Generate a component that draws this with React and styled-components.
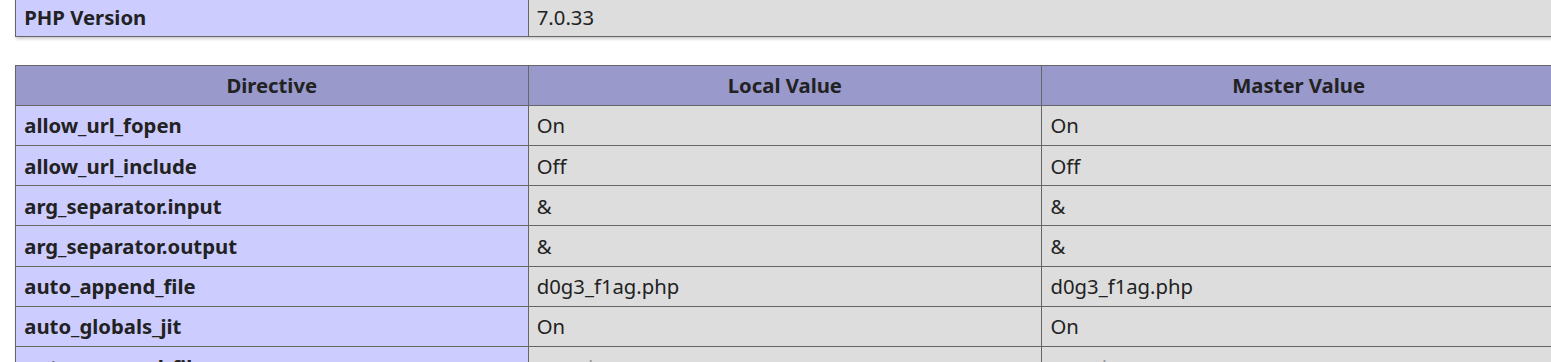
import React from 'react'
import styled, { createGlobalStyle } from 'styled-components'

const GlobalStyle = createGlobalStyle`
    html, body {
        margin: 0;
        padding: 0;
        background: #fff;
        overflow: hidden;
    }
    body {
        color: #222;
        font-family: "Noto Sans", "Open Sans", sans-serif;
    }
`

const Page = styled.div`
    width: 1551px;
    height: 362px;
    overflow: hidden;
`
const Table = styled.table`
    border-collapse: collapse;
    border: 0;
    width: 1541px;
    margin: ${p => p.$top} 0 0 15px;
    box-shadow: 1px 2px 3px #ccc;
    font-size: 20.3px;
    line-height: 26px;
`
const Cell = styled.td`
    border: 1px solid #666;
    padding: 6.6px 8.25px;
    vertical-align: baseline;
    text-align: left;
    white-space: nowrap;
`
const Key = styled(Cell)`
    width: 495px;
    background-color: #ccf;
    font-weight: bold;
`
const Value = styled(Cell)`
    background-color: #ddd;
`
const Head = styled.th`
    border: 1px solid #666;
    padding: 6.6px 8.25px;
    background-color: #99c;
    font-weight: bold;
    text-align: center;
    vertical-align: baseline;
`
const NoValue = styled.i`
    color: #999;
`

const rows = [
    ['allow_url_fopen', 'On', 'On'],
    ['allow_url_include', 'Off', 'Off'],
    ['arg_separator.input', '&', '&'],
    ['arg_separator.output', '&', '&'],
    ['auto_append_file', 'd0g3_f1ag.php', 'd0g3_f1ag.php'],
    ['auto_globals_jit', 'On', 'On'],
    ['auto_prepend_file', null, null],
]

const show = (v) => v === null ? <NoValue>no value</NoValue> : v

const App = () => {
    return (
        <Page>
            <GlobalStyle />
            <Table $top="-4px">
                <tbody>
                    <tr>
                        <Key>PHP Version</Key>
                        <Value>7.0.33</Value>
                    </tr>
                </tbody>
            </Table>
            <Table $top="27.5px">
                <tbody>
                    <tr>
                        <Head>Directive</Head>
                        <Head>Local Value</Head>
                        <Head>Master Value</Head>
                    </tr>
                    {rows.map(([name, local, master]) => (
                        <tr key={name}>
                            <Key>{name}</Key>
                            <Value>{show(local)}</Value>
                            <Value>{show(master)}</Value>
                        </tr>
                    ))}
                </tbody>
            </Table>
        </Page>
    )
}

export default App
